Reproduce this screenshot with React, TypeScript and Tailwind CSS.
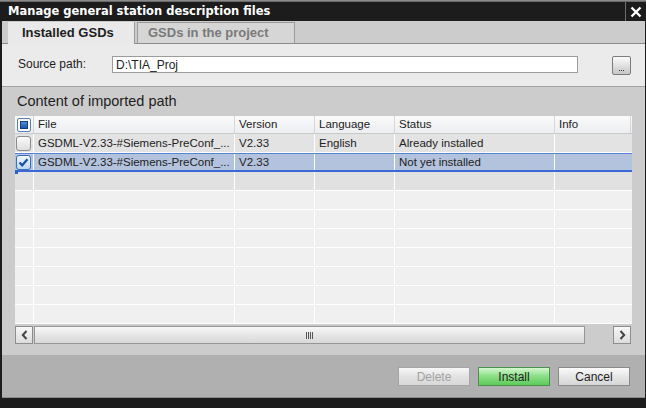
import React from "react";

const cols = [
  { w: "w-[201px]", label: "File" },
  { w: "w-[80px]", label: "Version" },
  { w: "w-[80px]", label: "Language" },
  { w: "w-[160px]", label: "Status" },
  { w: "w-[76px]", label: "Info" },
];

function HeaderCheck() {
  return (
    <div className="w-[14px] h-[14px] rounded-[2px] border border-[#5a7fb5] bg-white flex items-center justify-center">
      <div className="w-[8px] h-[8px] bg-[linear-gradient(#4f8ad8,#1d56b0)] border border-[#173f86]" />
    </div>
  );
}

function RowCheck({ checked }: { checked?: boolean }) {
  if (checked) {
    return (
      <div className="w-[15px] h-[15px] rounded-[3px] border border-[#3b6fb8] bg-[linear-gradient(#eef6ff,#bcd6f3)] flex items-center justify-center">
        <svg width="11" height="11" viewBox="0 0 11 11">
          <polyline points="1.5,5.5 4.2,8.3 9.5,2.2" fill="none" stroke="#1b4fa0" strokeWidth="2.2" />
        </svg>
      </div>
    );
  }
  return (
    <div className="w-[15px] h-[15px] rounded-[3px] border border-[#8c8c8c] bg-[linear-gradient(#fafafa,#dedede)]" />
  );
}

const rows = [
  { file: "GSDML-V2.33-#Siemens-PreConf_...", version: "V2.33", lang: "English", status: "Already installed", checked: false },
  { file: "GSDML-V2.33-#Siemens-PreConf_...", version: "V2.33", lang: "", status: "Not yet installed", checked: true },
];

export default function App() {
  return (
    <div className="w-[646px] h-[408px] bg-[#1c1c1c] flex flex-col font-['Liberation_Sans',Arial,sans-serif] text-[#222] overflow-hidden">
      {/* title bar */}
      <div className="h-[21px] flex flex-col shrink-0">
        <div className="h-[2px] bg-[linear-gradient(#9a9a9a,#5a5a5a)]" />
        <div className="flex-1 flex items-center">
          <span className="pl-[8px] text-white text-[11.5px] font-bold font-['DejaVu_Sans',sans-serif] leading-none">
            Manage general station description files
          </span>
          <div className="ml-auto h-full w-[21px] border-l border-[#6e6e6e] flex items-center justify-center">
            <svg width="12" height="12" viewBox="0 0 12 12">
              <path d="M1.5 1.5 L10.5 10.5 M10.5 1.5 L1.5 10.5" stroke="#fff" strokeWidth="2.4" />
            </svg>
          </div>
        </div>
      </div>

      <div className="flex-1 ml-[2px] mr-[1px] flex flex-col min-h-0">
        {/* tabs */}
        <div className="h-[23px] flex shrink-0 bg-[#cccccc]">
          <div className="w-[6px] border-b border-[#8a8a8a]" />
          <div className="w-[127px] mt-[1px] bg-[#e9e9e9] border-r border-[#9a9a9a] flex items-center pl-[14px] text-[13px] font-bold text-[#1e1e1e]">
            Installed GSDs
          </div>
          <div className="w-[2px] border-b border-[#8a8a8a]" />
          <div className="w-[158px] mt-[1px] bg-[#d6d6d6] border border-[#9a9a9a] border-b-[#8a8a8a] flex items-center pl-[10px] text-[13px] font-bold text-[#7a7a7a]">
            GSDs in the project
          </div>
          <div className="flex-1 border-b border-[#8a8a8a]" />
        </div>

        {/* source path */}
        <div className="h-[43px] shrink-0 bg-[#ebebeb] border-b border-[#a3a3a3] flex items-start pt-[12px]">
          <span className="w-[110px] shrink-0 pl-[16px] text-[12px] leading-[17px]">Source path:</span>
          <div className="w-[466px] h-[17px] bg-white border border-[#9c9c9c] flex items-center pl-[3px] text-[12px]">
            D:\TIA_Proj
          </div>
          <div className="ml-auto mr-[14px] w-[19px] h-[19px] rounded-[2px] border border-[#7c7c7c] bg-[linear-gradient(#fbfbfb,#e4e4e4_45%,#c6c6c6)] flex items-end justify-center pb-[3px]">
            <div className="flex gap-[1px]">
              <div className="w-[1px] h-[1px] bg-[#333]" />
              <div className="w-[1px] h-[1px] bg-[#333]" />
              <div className="w-[1px] h-[1px] bg-[#333]" />
            </div>
          </div>
        </div>

        {/* content section */}
        <div className="h-[268px] shrink-0 bg-[#cccccc] flex flex-col pl-[13px]">
          <div className="h-[29px] flex items-center pl-[2px] pt-[1px] text-[14.5px] text-[#1e1e1e]">
            Content of imported path
          </div>
          <div className="w-[617px] relative">
            {/* header */}
            <div className="h-[18px] flex bg-[linear-gradient(#fafafa,#eceef1)] border-b border-[#c9c9c9] text-[11.5px]">
              <div className="w-[19px] border-r border-[#d2d2d2] flex items-center justify-center">
                <HeaderCheck />
              </div>
              {cols.map((c) => (
                <div key={c.label} className={`${c.w} border-r border-[#d6d6d6] flex items-center pl-[4px] pt-[1px] leading-none`}>
                  {c.label}
                </div>
              ))}
            </div>
            {/* rows */}
            {rows.map((r, i) => (
              <div
                key={i}
                className={
                  r.checked
                    ? "h-[19px] flex bg-[#b3c2dd] border-t border-[#5b82d4] border-b-2 border-b-[#3a69d6] text-[11.5px] leading-none"
                    : "h-[19px] flex bg-[#e3e3e3] border-b border-white text-[11.5px] leading-none"
                }
              >
                <div className="w-[19px] border-r border-white flex items-center pl-[1px]">
                  <RowCheck checked={r.checked} />
                </div>
                <div className="w-[201px] border-r border-white flex items-center pl-[4px] pt-[2px] whitespace-nowrap overflow-hidden">{r.file}</div>
                <div className="w-[80px] border-r border-white flex items-center pl-[4px] pt-[2px]">{r.version}</div>
                <div className="w-[80px] border-r border-white flex items-center pl-[4px] pt-[2px]">{r.lang}</div>
                <div className="w-[160px] border-r border-white flex items-center pl-[4px] pt-[2px]">{r.status}</div>
                <div className="w-[76px]" />
              </div>
            ))}
            {Array.from({ length: 8 }).map((_, i) => (
              <div key={i} className={`h-[19px] flex border-b border-white ${i === 0 ? "bg-[#e1e1e1]" : "bg-[#f0f0f0]"}`}>
                <div className="w-[19px] border-r border-white" />
                <div className="w-[201px] border-r border-white" />
                <div className="w-[80px] border-r border-white" />
                <div className="w-[80px] border-r border-white" />
                <div className="w-[160px] border-r border-white" />
                <div className="w-[76px]" />
              </div>
            ))}
            <div className="absolute left-0 top-[55px] w-[3px] h-[3px] bg-[#2c62d0]" />
          </div>

          {/* scrollbar */}
          <div className="w-[617px] h-[18px] mt-[2px] flex">
            <div className="w-[18px] h-full border border-[#8e8e8e] bg-[linear-gradient(#f7f7f7,#dcdcdc)] flex items-center justify-center">
              <svg width="7" height="10" viewBox="0 0 7 10">
                <polyline points="5.5,1 1.8,5 5.5,9" fill="none" stroke="#444" strokeWidth="2" />
              </svg>
            </div>
            <div className="ml-[1px] w-[551px] h-full border border-[#969696] bg-[linear-gradient(#f8f8f8,#e6e6e6_50%,#d8d8d8)] flex items-center justify-center">
              <div className="flex gap-[1px]">
                <div className="w-[1px] h-[7px] bg-[#555]" />
                <div className="w-[1px] h-[7px] bg-[#555]" />
                <div className="w-[1px] h-[7px] bg-[#555]" />
                <div className="w-[1px] h-[7px] bg-[#555]" />
              </div>
            </div>
            <div className="ml-auto mr-[1px] w-[18px] h-full border border-[#8e8e8e] bg-[linear-gradient(#f7f7f7,#dcdcdc)] flex items-center justify-center">
              <svg width="7" height="10" viewBox="0 0 7 10">
                <polyline points="1.5,1 5.2,5 1.5,9" fill="none" stroke="#444" strokeWidth="2" />
              </svg>
            </div>
          </div>
        </div>

        {/* buttons */}
        <div className="flex-1 bg-[#b0b0b0] border-b border-[#8c8c8c] flex items-start justify-end gap-[8px] pt-[12px] pr-[15px] text-[12px]">
          <button className="w-[72px] h-[19px] border border-[#a5a5a5] bg-[linear-gradient(#f7f7f7,#e2e2e2_50%,#d8d8d8)] text-[#a2a2a2] leading-none">
            Delete
          </button>
          <button className="w-[72px] h-[19px] border border-[#4f8f4f] bg-[linear-gradient(#d5f7cf,#8fe08a_45%,#5ccb5a)] text-[#1e1e1e] leading-none">
            Install
          </button>
          <button className="w-[72px] h-[19px] border border-[#8a8a8a] bg-[linear-gradient(#fafafa,#e6e6e6_50%,#d6d6d6)] text-[#1e1e1e] leading-none">
            Cancel
          </button>
        </div>
      </div>
      <div className="h-[10px] shrink-0" />
    </div>
  );
}
